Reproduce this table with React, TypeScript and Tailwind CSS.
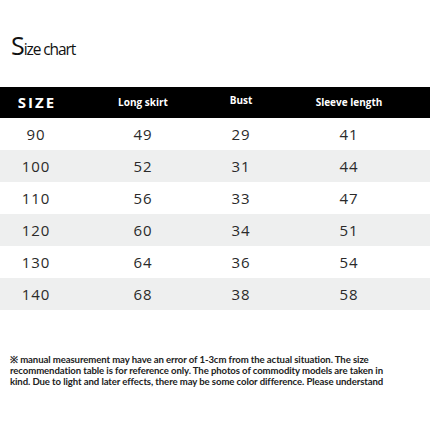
import React from 'react';

const rows = [
  ['90', '49', '29', '41'],
  ['100', '52', '31', '44'],
  ['110', '56', '33', '47'],
  ['120', '60', '34', '51'],
  ['130', '64', '36', '54'],
  ['140', '68', '38', '58'],
];

// column centers: 36, 143, 241, 354
const cols = 'grid grid-cols-[72px_142px_54px_162px]';

export default function App() {
  return (
    <div className="w-[430px] h-[430px] bg-white overflow-hidden font-['Open_Sans',sans-serif]">
      <div className="h-[87px] pl-[11px] pt-[33px] text-[#111]">
        <span className="text-[25px] leading-none tracking-[-1px]">S</span>
        <span className="text-[15.5px] leading-none tracking-[-1.1px]">ize chart</span>
      </div>
      <div className={`${cols} h-[31px] bg-black text-white items-center text-center`}>
        <div className="text-[15px] font-bold tracking-[2px] pl-[2px]">SIZE</div>
        <div className="text-[10px] font-bold">Long skirt</div>
        <div className="text-[10px] font-bold -mt-[4px]">Bust</div>
        <div className="text-[10px] font-bold">Sleeve length</div>
      </div>
      {rows.map((r, i) => (
        <div
          key={r[0]}
          className={`${cols} h-[32px] items-center text-center text-[15px] font-medium text-[#2a2a2a] tracking-[1px] ${i % 2 ? 'bg-[#eeefef]' : 'bg-white'}`}
        >
          {r.map((v, j) => (
            <div key={j}>{v}</div>
          ))}
        </div>
      ))}
      <p className="mt-[44px] pl-[10px] font-['Lato',sans-serif] text-[9.6px] leading-[11px] font-bold text-[#222] tracking-[-0.1px] whitespace-nowrap">
        ※ manual measurement may have an error of 1-3cm from the actual situation. The size
        <br />
        recommendation table is for reference only. The photos of commodity models are taken in
        <br />
        kind. Due to light and later effects, there may be some color difference. Please understand
      </p>
    </div>
  );
}
